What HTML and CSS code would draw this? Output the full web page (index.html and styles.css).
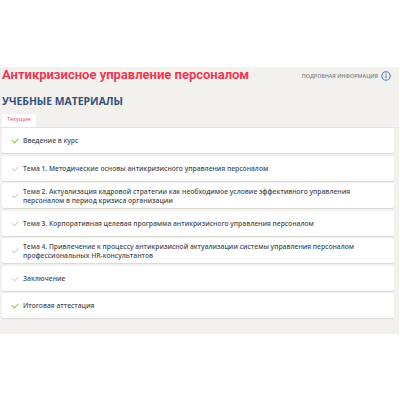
FILE: index.html
```html
<!DOCTYPE html>
<html>
	<head>
		<meta charset="UTF-8">
		<title>Антикризисное управление персоналом</title>
		<link rel="stylesheet" href="styles.css">
	</head>
	<body>
		<div class="top"></div>
		<div class="course">
			<div class="course-head">
				<h1 class="course-title">Антикризисное управление персоналом</h1>
				<a class="more" href="###">
					Подробная информация
					<svg class="info" width="10" height="10" viewBox="0 0 10 10">
						<circle cx="5" cy="5" r="4.2" fill="none" stroke="#3d7fc1" stroke-width="1.1"/>
						<rect x="4.45" y="4.2" width="1.1" height="3.2" fill="#3d7fc1"/>
						<circle cx="5" cy="2.9" r="0.65" fill="#3d7fc1"/>
					</svg>
				</a>
			</div>
			<h2 class="materials-title">Учебные материалы</h2>
			<div class="tabs">
				<span class="tab active">Текущие</span>
			</div>
			<ul class="lessons">
				<li class="lesson done">Введение в курс</li>
				<li class="lesson">Тема 1. Методические основы антикризисного управления персоналом</li>
				<li class="lesson">Тема 2. Актуализация кадровой стратегии как необходимое условие эффективного управления персоналом в период кризиса организации</li>
				<li class="lesson">Тема 3. Корпоративная целевая программа антикризисного управления персоналом</li>
				<li class="lesson">Тема 4. Привлечение к процессу антикризисной актуализации системы управления персоналом профессиональных HR-консультантов</li>
				<li class="lesson">Заключение</li>
				<li class="lesson done">Итоговая аттестация</li>
			</ul>
		</div>
	</body>
</html>
```

FILE: styles.css
```css
*{
	margin: 0;
	padding: 0;
}
body{
	background: #fff;
	font-family: "Open Sans", "Liberation Sans", sans-serif;
}
ul{
	list-style: none;
}
.top{
	height: 67px;
}
.course{
	width: 399px;
	background: #f2f1ed;
	padding: 0 0 16px 0;
}
.course-head{
	display: flex;
	align-items: center;
	justify-content: space-between;
	padding: 0 8px 0 2px;
	height: 16px;
}
.course-title{
	font-family: Roboto, "Liberation Sans", sans-serif;
	font-size: 13px;
	font-weight: 700;
	color: #ec3a52;
	line-height: 16px;
	white-space: nowrap;
}
.more{
	display: flex;
	align-items: center;
	gap: 3px;
	font-size: 5.4px;
	font-weight: 600;
	text-transform: uppercase;
	color: #7a7f88;
	text-decoration: none;
	white-space: nowrap;
	margin-top: 2px;
}
.materials-title{
	font-size: 10.4px;
	font-weight: 700;
	text-transform: uppercase;
	color: #34507a;
	line-height: 16px;
	padding: 10px 0 0 2px;
}
.tabs{
	display: flex;
	padding: 5px 0 0 2px;
}
.tab{
	background: #fff;
	border-radius: 2px 2px 0 0;
	font-size: 5.6px;
	color: #ec3a52;
	padding: 2px 5px 4px;
	line-height: 7px;
}
.lessons{
	display: flex;
	flex-direction: column;
	gap: 2.5px;
	padding: 0 5px 0 2px;
	border-top: 1px solid #e4e3df;
}
.lesson{
	position: relative;
	background: #fff;
	border-radius: 2px;
	box-shadow: 0 1px 1px rgba(0, 0, 0, 0.1);
	min-height: 25px;
	box-sizing: border-box;
	display: flex;
	align-items: center;
	padding: 3.5px 20px 3.5px 21px;
	font-size: 6.7px;
	font-weight: 600;
	line-height: 9px;
	color: #4e5156;
}
.lesson::before{
	content: "";
	position: absolute;
	left: 10px;
	top: 50%;
	width: 5px;
	height: 2.5px;
	margin-top: -2.5px;
	border-left: 1px solid #d0d0d0;
	border-bottom: 1px solid #d0d0d0;
	transform: rotate(-45deg);
}
.lesson.done::before{
	border-color: #8cc63e;
}
```
